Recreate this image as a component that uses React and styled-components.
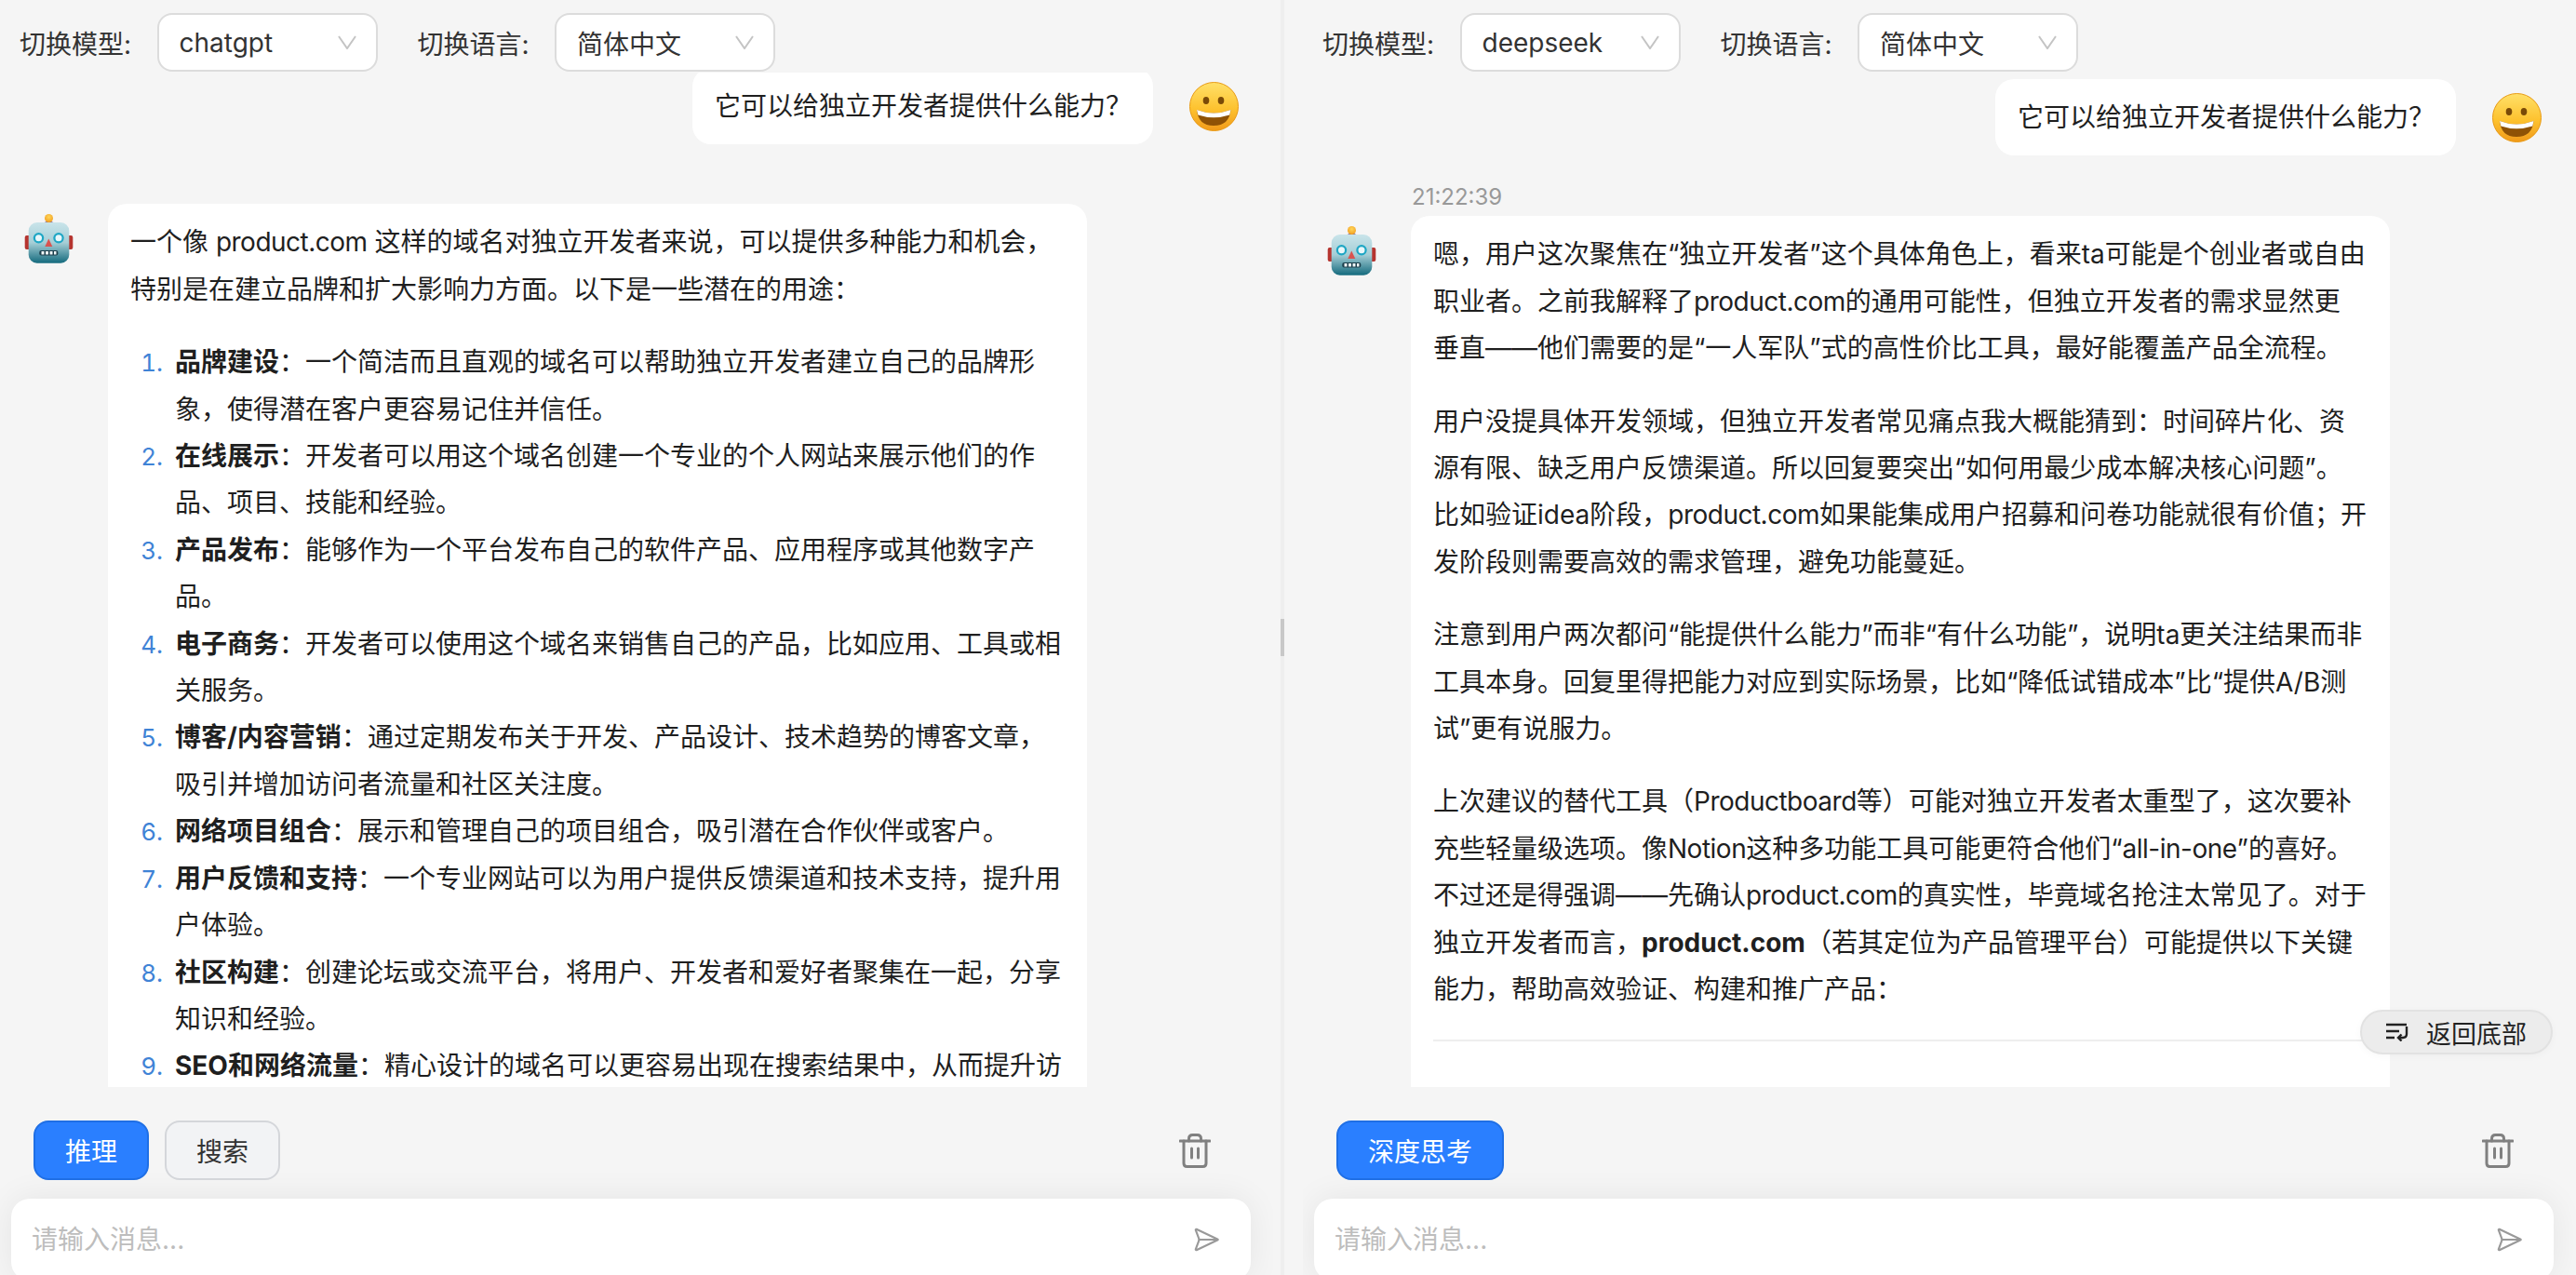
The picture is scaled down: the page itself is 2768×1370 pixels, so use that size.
import React from "react";
import styled, { createGlobalStyle } from "styled-components";
import { SendHorizontal } from "lucide-react";

const Global = createGlobalStyle`
  html, body { margin: 0; padding: 0; background: #f5f5f5; }
  body { font-family: Inter, "Noto Sans CJK SC", sans-serif; color: #1f1f1f; }
  * { box-sizing: border-box; }
`;

const Page = styled.div`
  display: flex;
  width: 2768px;
  height: 1370px;
  overflow: hidden;
  background: #f5f5f5;
`;
const Pane = styled.section`
  position: relative;
  display: flex;
  flex-direction: column;
  flex: 0 0 1368px;
  height: 1370px;
  overflow: hidden;
`;
const Divider = styled.div`
  position: relative;
  flex: 0 0 4px;
  margin: 0 20px 0 8px;
  background: #eeeeee;
  display: flex;
  align-items: center;
`;
const Handle = styled.div`
  width: 4px;
  height: 40px;
  background: #c8c8c8;
`;
const Header = styled.header`
  flex: 0 0 78px;
  display: flex;
  align-items: flex-start;
  padding: 14px 0 0 21px;
  position: relative;
  z-index: 1;
`;
const Field = styled.div`
  display: flex;
  align-items: center;
  margin-right: 43px;
`;
const FieldLabel = styled.label`
  width: 147.500px;
  font-size: 28px;
  color: #333;
`;
const SelectBox = styled.div`
  display: flex;
  align-items: center;
  justify-content: space-between;
  width: 237px;
  height: 63px;
  padding: 0 21px 0 22px;
  background: #fff;
  border: 2px solid #dcdcdc;
  border-radius: 16px;
  font-size: 28px;
  color: #333;
`;
const Messages = styled.main`
  flex: 1 1 auto;
  min-height: 0;
  overflow: hidden;
`;
const Scroller = styled.div`
  margin-top: ${(p) => p.$shift}px;
`;
const UserRow = styled.div`
  display: flex;
  justify-content: flex-end;
  align-items: center;
  gap: 39px;
  padding-right: 37px;
`;
const UserBubble = styled.div`
  width: 495px;
  padding: 16px 30px 16px 24px;
  background: #fff;
  border-radius: 20px;
  font-size: 28px;
  line-height: 50.4px;
  white-space: nowrap;
`;
const Time = styled.div`
  margin: 30px 0 0 117px;
  height: 35px;
  font-size: 24px;
  line-height: 30px;
  color: #999;
`;
const AssistantRow = styled.div`
  display: flex;
  align-items: flex-start;
  margin-top: ${(p) => p.$top}px;
  padding-left: 26px;
  gap: 37px;
`;
const Avatar = styled.div`
  flex: 0 0 53px;
  height: 53px;
  margin-top: 11px;
`;
const Bubble = styled.article`
  width: 1052px;
  padding: 16px 24px;
  background: #fff;
  border-radius: 20px 20px 0 0;
  font-size: 28px;
  line-height: 50.4px;
`;
const Para = styled.p`
  margin: 0 0 28px;
  &:last-child { margin-bottom: 0; }
`;
const Latin = styled.span`
  letter-spacing: -0.5px;
`;
const Rule = styled.hr`
  border: 0;
  height: 2px;
  background: #eeeeee;
  margin: 28px 0 60px;
`;
const List = styled.ol`
  margin: 0;
  padding: 0 0 0 48px;
`;
const Item = styled.li`
  &::marker {
    content: counter(list-item) ".\\2002";
    color: #3f83d6;
    font-size: 26px;
  }
`;
const Strong = styled.strong`
  font-weight: 700;
`;
const Footer = styled.footer`
  flex: 0 0 202px;
  min-height: 0;
  padding: 36px 24px 0 12px;
`;
const Tools = styled.div`
  display: flex;
  align-items: center;
  justify-content: space-between;
  height: 64px;
  padding: 0 43px 0 24px;
  margin-bottom: 20px;
`;
const ToolGroup = styled.div`
  display: flex;
  gap: 17px;
`;
const ToolButton = styled.button`
  height: 64px;
  padding: 0 32px;
  border-radius: 16px;
  font: inherit;
  font-size: 28px;
  border: 2px solid ${(p) => (p.$active ? "#1f6fe5" : "#d4d6da")};
  background: ${(p) => (p.$active ? "#2a7fff" : "#f2f3f5")};
  color: ${(p) => (p.$active ? "#fff" : "#333")};
`;
const InputBox = styled.div`
  display: flex;
  align-items: center;
  justify-content: space-between;
  height: 88px;
  padding: 0 33px 0 22px;
  background: #fff;
  border-radius: 20px;
  box-shadow: 0 0 36px rgba(0, 0, 0, 0.07);
  color: #999;
`;
const MessageInput = styled.input`
  flex: 1;
  border: 0;
  outline: 0;
  padding: 0;
  background: transparent;
  font: inherit;
  font-size: 28px;
  &::placeholder { color: #bdbdbd; opacity: 1; }
`;
const BackPill = styled.div`
  position: absolute;
  right: 25px;
  bottom: 237px;
  display: flex;
  align-items: center;
  justify-content: center;
  gap: 19px;
  width: 207px;
  height: 48px;
  background: #ececec;
  border: 2px solid #e2e2e2;
  border-radius: 24px;
  font-size: 27px;
  color: #222;
  box-shadow: 0 2px 8px rgba(0, 0, 0, 0.03);
`;

const Chevron = () => (
  <svg width="20" height="15" viewBox="0 0 20 15" fill="none">
    <path d="M1 1l9 13 9-13" stroke="#c4c4c4" strokeWidth="2" />
  </svg>
);
const Trash = () => (
  <svg width="34" height="37" viewBox="0 0 34 37" fill="none" stroke="#808080" strokeWidth="3" strokeLinecap="round">
    <path d="M1 8h32" />
    <path d="M10.500 8V5.500Q10.500 1.500 14.500 1.500H19.500Q23.500 1.500 23.500 5.500V8" />
    <path d="M5 8v24q0 3.500 3.500 3.500h17q3.500 0 3.500-3.500V8" />
    <path d="M13.500 16v10M20.500 16v10" />
  </svg>
);
const BackIcon = () => (
  <svg width="24" height="20" viewBox="0 0 24 20" fill="none" stroke="#222" strokeWidth="2.400">
    <path d="M0 2h22M0 9h14M0 16h9" />
    <path d="M22 4v8q0 4-4 4h-5" />
    <path d="M16.500 12.500 13 16l3.500 3.500" />
  </svg>
);
const Robot = () => (
  <svg width="53" height="53" viewBox="0 0 53 53">
    <defs>
      <linearGradient id="rh" x1="0" y1="0" x2="0" y2="1">
        <stop offset="0" stopColor="#c9e4ea" />
        <stop offset="0.5" stopColor="#a5ced6" />
        <stop offset="1" stopColor="#146a7d" />
      </linearGradient>
      <radialGradient id="rb" cx="0.5" cy="0.35" r="0.7">
        <stop offset="0" stopColor="#ffd659" />
        <stop offset="1" stopColor="#f09a1c" />
      </radialGradient>
    </defs>
    <rect x="0.700" y="23" width="6" height="15" rx="2" fill="#b5342f" />
    <rect x="46.300" y="23" width="6" height="15" rx="2" fill="#b5342f" />
    <path d="M20 12q0-4 6.500-4t6.500 4z" fill="#5d4a8c" />
    <circle cx="26.500" cy="4.500" r="4.500" fill="url(#rb)" />
    <rect x="4.700" y="9" width="43.600" height="43.700" rx="9" fill="url(#rh)" />
    <circle cx="15.500" cy="25.700" r="5.700" fill="#1ea6c4" />
    <circle cx="15.500" cy="25.700" r="3.500" fill="#e9f7fa" />
    <circle cx="37" cy="25.700" r="5.700" fill="#1ea6c4" />
    <circle cx="37" cy="25.700" r="3.500" fill="#e9f7fa" />
    <path d="M26.300 26.500 22.300 35h8z" fill="#d9534f" />
    <rect x="16.300" y="39" width="20" height="5.500" rx="2" fill="#1c3f4c" />
    <path d="M18.500 40h3v3.500h-3zM23 40h3v3.500h-3zM27.500 40h3v3.500h-3zM32 40h2.500v3.500H32z" fill="#eef6f7" />
  </svg>
);
const Smile = () => (
  <svg width="53" height="53" viewBox="0 0 53 53">
    <defs>
      <linearGradient id="sm" x1="0" y1="0" x2="0" y2="1">
        <stop offset="0" stopColor="#ffe069" />
        <stop offset="0.55" stopColor="#fdc22f" />
        <stop offset="1" stopColor="#f19a1a" />
      </linearGradient>
    </defs>
    <circle cx="26.500" cy="26.500" r="26" fill="url(#sm)" stroke="#e89a14" strokeWidth="1" />
    <ellipse cx="18" cy="20" rx="3.300" ry="4" fill="#7a4a07" />
    <ellipse cx="34" cy="20" rx="3.300" ry="4" fill="#7a4a07" />
    <path d="M8 30Q26 37 44.500 30Q43 47 26 47Q9.500 47 8 30z" fill="#8f5205" />
    <path d="M8 30Q26 37 44.500 30L43.300 35.500Q26 41 9.300 35.500z" fill="#fff" />
  </svg>
);

const Selector = ({ label, value }) => (
  <Field>
    <FieldLabel>{label}</FieldLabel>
    <SelectBox>
      <span>{value}</span>
      <Chevron />
    </SelectBox>
  </Field>
);

const LEFT_ITEMS = [
  ["品牌建设", "：一个简洁而且直观的域名可以帮助独立开发者建立自己的品牌形象，使得潜在客户更容易记住并信任。"],
  ["在线展示", "：开发者可以用这个域名创建一个专业的个人网站来展示他们的作品、项目、技能和经验。"],
  ["产品发布", "：能够作为一个平台发布自己的软件产品、应用程序或其他数字产品。"],
  ["电子商务", "：开发者可以使用这个域名来销售自己的产品，比如应用、工具或相关服务。"],
  ["博客/内容营销", "：通过定期发布关于开发、产品设计、技术趋势的博客文章，吸引并增加访问者流量和社区关注度。"],
  ["网络项目组合", "：展示和管理自己的项目组合，吸引潜在合作伙伴或客户。"],
  ["用户反馈和支持", "：一个专业网站可以为用户提供反馈渠道和技术支持，提升用户体验。"],
  ["社区构建", "：创建论坛或交流平台，将用户、开发者和爱好者聚集在一起，分享知识和经验。"],
  ["SEO和网络流量", "：精心设计的域名可以更容易出现在搜索结果中，从而提升访问量。"],
];

const Pill = () => (
  <BackPill>
    <BackIcon />
    <span>返回底部</span>
  </BackPill>
);

const Bottom = ({ buttons }) => (
  <Footer>
    <Tools>
      <ToolGroup>
        {buttons.map((b, i) => (
          <ToolButton key={b} $active={i === 0}>{b}</ToolButton>
        ))}
      </ToolGroup>
      <Trash />
    </Tools>
    <InputBox>
      <MessageInput placeholder="请输入消息..." />
      <SendHorizontal size={30} strokeWidth={1.700} color="#999" />
    </InputBox>
  </Footer>
);

const Question = () => (
  <UserRow>
    <UserBubble>它可以给独立开发者提供什么能力？</UserBubble>
    <Smile />
  </UserRow>
);

export default function App() {
  return (
    <Page>
      <Global />
      <Pane>
        <Header>
          <Selector label="切换模型:" value="chatgpt" />
          <Selector label="切换语言:" value="简体中文" />
        </Header>
        <Messages>
          <Scroller $shift={-5}>
            <Question />
            <AssistantRow $top={64}>
              <Avatar><Robot /></Avatar>
              <Bubble>
                <Para>一个像 <Latin>product.com</Latin> 这样的域名对独立开发者来说，可以提供多种能力和机会，特别是在建立品牌和扩大影响力方面。以下是一些潜在的用途：</Para>
                <List>
                  {LEFT_ITEMS.map(([t, d]) => (
                    <Item key={t}><Strong>{t}</Strong>{d}</Item>
                  ))}
                </List>
              </Bubble>
            </AssistantRow>
          </Scroller>
        </Messages>
        <Bottom buttons={["推理", "搜索"]} />
      </Pane>
      <Divider><Handle /></Divider>
      <Pane>
        <Header>
          <Selector label="切换模型:" value="deepseek" />
          <Selector label="切换语言:" value="简体中文" />
        </Header>
        <Messages>
          <Scroller $shift={7}>
            <Question />
            <Time>21:22:39</Time>
            <AssistantRow $top={0}>
              <Avatar><Robot /></Avatar>
              <Bubble>
                <Para>嗯，用户这次聚焦在“独立开发者”这个具体角色上，看来ta可能是个创业者或自由职业者。之前我解释了<Latin>product.com</Latin>的通用可能性，但独立开发者的需求显然更<br />垂直——他们需要的是“一人军队”式的高性价比工具，最好能覆盖产品全流程。</Para>
                <Para>用户没提具体开发领域，但独立开发者常见痛点我大概能猜到：时间碎片化、资源有限、缺乏用户反馈渠道。所以回复要突出“如何用最少成本解决核心问题”。比如验证idea阶段，<Latin>product.com</Latin>如果能集成用户招募和问卷功能就很有价值；开发阶段则需要高效的需求管理，避免功能蔓延。</Para>
                <Para>注意到用户两次都问“能提供什么能力”而非“有什么功能”，说明ta更关注结果而非工具本身。回复里得把能力对应到实际场景，比如“降低试错成本”比“提供A/B测试”更有说服力。</Para>
                <Para>上次建议的替代工具（<Latin>Productboard</Latin>等）可能对独立开发者太重型了，这次要补充些轻量级选项。像<Latin>Notion</Latin>这种多功能工具可能更符合他们“<Latin>all-in-one</Latin>”的喜好。不过还是得强调——先确认<Latin>product.com</Latin>的真实性，毕竟域名抢注太常见了。对于独立开发者而言，<Strong>product.com</Strong>（若其定位为产品管理平台）可能提供以下关键能力，帮助高效验证、构建和推广产品：</Para>
                <Rule />
              </Bubble>
            </AssistantRow>
          </Scroller>
        </Messages>
        <Bottom buttons={["深度思考"]} />
        <Pill />
      </Pane>
    </Page>
  );
}
